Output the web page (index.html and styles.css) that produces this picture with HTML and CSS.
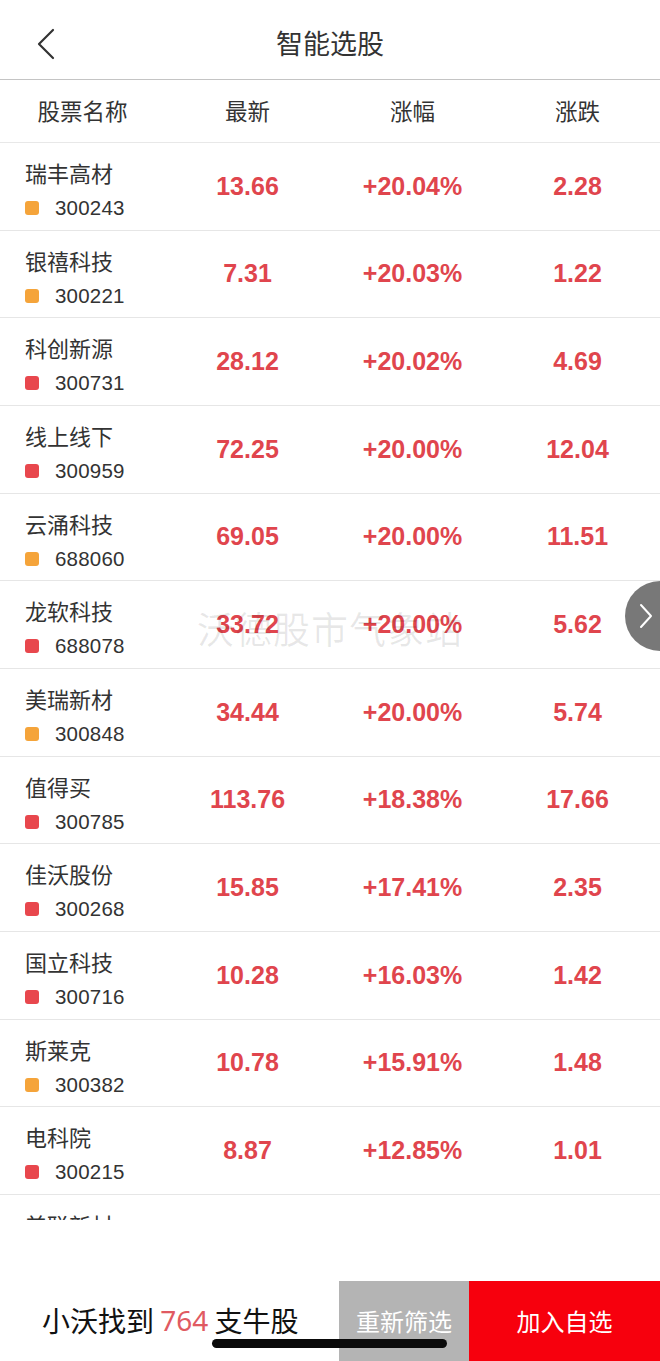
FILE: index.html
```html
<!DOCTYPE html>
<html lang="zh">
<head>
<meta charset="utf-8">
<title>智能选股</title>
<link rel="stylesheet" href="styles.css">
</head>
<body>
<div class="page">
  <header class="nav">
    <svg class="back" width="20" height="32" viewBox="0 0 20 32"><polyline points="17,2 3,16 17,30" fill="none" stroke="#333" stroke-width="2.2" stroke-linecap="round" stroke-linejoin="round"/></svg>
    <h1 class="title">智能选股</h1>
  </header>
  <div class="thead">
    <div class="th">股票名称</div>
    <div class="th">最新</div>
    <div class="th">涨幅</div>
    <div class="th">涨跌</div>
  </div>
  <div class="list">
    <div class="row"><div class="name"><div class="nm">瑞丰高材</div><div class="code"><span class="sq orange"></span>300243</div></div><div class="num">13.66</div><div class="num">+20.04%</div><div class="num">2.28</div></div>
    <div class="row"><div class="name"><div class="nm">银禧科技</div><div class="code"><span class="sq orange"></span>300221</div></div><div class="num">7.31</div><div class="num">+20.03%</div><div class="num">1.22</div></div>
    <div class="row"><div class="name"><div class="nm">科创新源</div><div class="code"><span class="sq red"></span>300731</div></div><div class="num">28.12</div><div class="num">+20.02%</div><div class="num">4.69</div></div>
    <div class="row"><div class="name"><div class="nm">线上线下</div><div class="code"><span class="sq red"></span>300959</div></div><div class="num">72.25</div><div class="num">+20.00%</div><div class="num">12.04</div></div>
    <div class="row"><div class="name"><div class="nm">云涌科技</div><div class="code"><span class="sq orange"></span>688060</div></div><div class="num">69.05</div><div class="num">+20.00%</div><div class="num">11.51</div></div>
    <div class="row"><div class="name"><div class="nm">龙软科技</div><div class="code"><span class="sq red"></span>688078</div></div><div class="num">33.72</div><div class="num">+20.00%</div><div class="num">5.62</div></div>
    <div class="row"><div class="name"><div class="nm">美瑞新材</div><div class="code"><span class="sq orange"></span>300848</div></div><div class="num">34.44</div><div class="num">+20.00%</div><div class="num">5.74</div></div>
    <div class="row"><div class="name"><div class="nm">值得买</div><div class="code"><span class="sq red"></span>300785</div></div><div class="num">113.76</div><div class="num">+18.38%</div><div class="num">17.66</div></div>
    <div class="row"><div class="name"><div class="nm">佳沃股份</div><div class="code"><span class="sq red"></span>300268</div></div><div class="num">15.85</div><div class="num">+17.41%</div><div class="num">2.35</div></div>
    <div class="row"><div class="name"><div class="nm">国立科技</div><div class="code"><span class="sq red"></span>300716</div></div><div class="num">10.28</div><div class="num">+16.03%</div><div class="num">1.42</div></div>
    <div class="row"><div class="name"><div class="nm">斯莱克</div><div class="code"><span class="sq orange"></span>300382</div></div><div class="num">10.78</div><div class="num">+15.91%</div><div class="num">1.48</div></div>
    <div class="row"><div class="name"><div class="nm">电科院</div><div class="code"><span class="sq red"></span>300215</div></div><div class="num">8.87</div><div class="num">+12.85%</div><div class="num">1.01</div></div>
    <div class="row"><div class="name"><div class="nm">美联新材</div></div></div>
    <div class="watermark">沃德股市气象站</div>
    <div class="side-btn"><svg width="14" height="26" viewBox="0 0 14 26"><polyline points="2,2 12,13 2,24" fill="none" stroke="#fff" stroke-width="2" stroke-linecap="round" stroke-linejoin="round"/></svg></div>
  </div>
  <div class="spacer"></div>
  <footer class="bar">
    <div class="found">小沃找到 <span class="count">764</span> 支牛股</div>
    <div class="btn gray">重新筛选</div>
    <div class="btn red-btn">加入自选</div>
    <div class="home"></div>
  </footer>
</div>
</body>
</html>
```

FILE: styles.css
```css
* { box-sizing: border-box; margin: 0; padding: 0; }
html, body { background: #fff; }
body {
  width: 660px;
  height: 1361px;
  overflow: hidden;
  font-family: "Noto Sans CJK SC", "Noto Sans", sans-serif;
  color: #333;
}
.page {
  position: relative;
  width: 660px;
  height: 1361px;
  display: flex;
  flex-direction: column;
}
.nav {
  height: 80px;
  flex: none;
  border-bottom: 1px solid #c4c4c4;
  display: flex;
  align-items: center;
  justify-content: center;
  position: relative;
}
.back {
  position: absolute;
  left: 36px;
  top: 28px;
}
.title {
  font-size: 27px;
  font-weight: 400;
  color: #333;
  line-height: 1;
  margin-top: 6px;
}
.thead {
  height: 63px;
  flex: none;
  display: grid;
  grid-template-columns: repeat(4, 165px);
  align-items: center;
  border-bottom: 1px solid #e8e8e8;
}
.th {
  text-align: center;
  font-size: 22.5px;
  color: #333;
  line-height: 1;
  margin-bottom: 2px;
}
.list {
  height: 1077px;
  flex: none;
  overflow: hidden;
  position: relative;
}
.row {
  height: 87.67px;
  display: grid;
  grid-template-columns: repeat(4, 165px);
  align-items: center;
  border-bottom: 1px solid #e6e6e6;
}
.name {
  padding-left: 25px;
  align-self: stretch;
  display: flex;
  flex-direction: column;
  padding-top: 17px;
}
.nm {
  font-size: 22px;
  line-height: 25px;
  color: #333;
}
.code {
  margin-top: 12px;
  display: flex;
  align-items: center;
  font-family: "Liberation Sans", Arial, sans-serif;
  font-size: 20.5px;
  line-height: 22px;
  color: #333;
  letter-spacing: 0.2px;
}
.sq {
  width: 14px;
  height: 14px;
  border-radius: 3px;
  margin-right: 16px;
  flex: none;
}
.sq.orange { background: #f5a43a; }
.sq.red { background: #e8474d; }
.num {
  text-align: center;
  font-family: "Liberation Sans", Arial, sans-serif;
  font-weight: 700;
  font-size: 25px;
  color: #e0454d;
  line-height: 1;
}
.watermark {
  position: absolute;
  left: 0;
  right: 0;
  top: 467px;
  text-align: center;
  font-size: 37px;
  line-height: 1;
  color: rgba(0, 0, 0, 0.09);
  letter-spacing: 1px;
  pointer-events: none;
}
.side-btn {
  position: absolute;
  left: 625px;
  top: 438px;
  width: 70px;
  height: 70px;
  border-radius: 50%;
  background: #787878;
  display: flex;
  align-items: center;
  padding-left: 14px;
}
.spacer { flex: 1; }
.bar {
  height: 80px;
  flex: none;
  display: flex;
  position: relative;
}
.found {
  width: 339px;
  padding-left: 42px;
  display: flex;
  align-items: center;
  font-size: 28px;
  color: #111;
  white-space: pre;
  padding-bottom: 2px;
}
.count { color: #e05a62; font-family: "Noto Sans", sans-serif; }
.btn {
  display: flex;
  align-items: center;
  justify-content: center;
  color: #fff;
  font-size: 24px;
  padding-bottom: 2px;
}
.gray { width: 130px; background: #b4b4b4; }
.red-btn { width: 191px; background: #f7000d; }
.home {
  position: absolute;
  left: 212px;
  top: 58px;
  width: 235px;
  height: 9px;
  border-radius: 5px;
  background: #0a0a0a;
}
```
